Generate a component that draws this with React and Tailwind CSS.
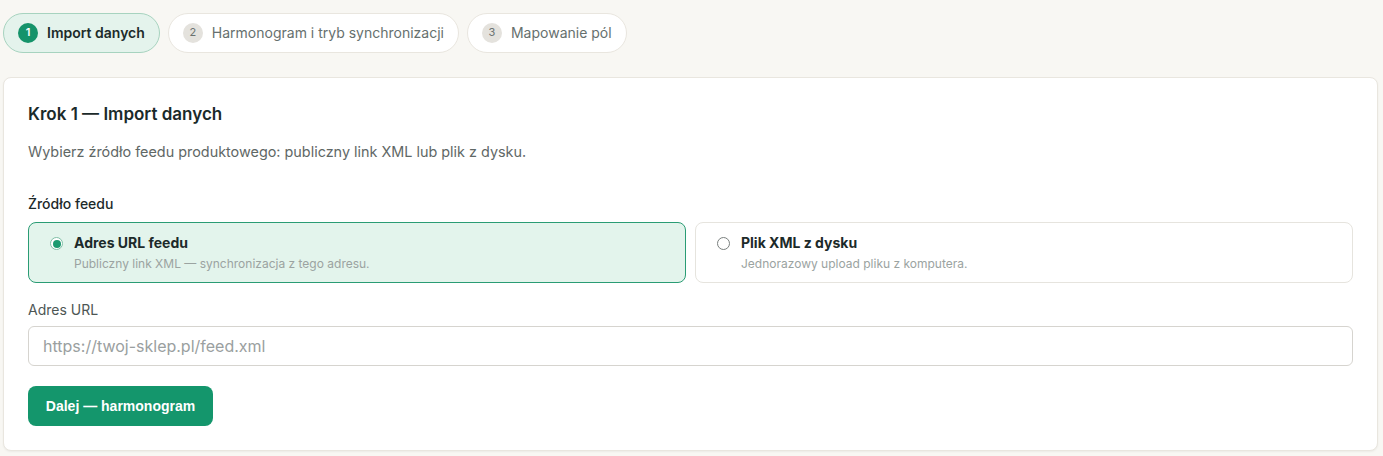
import { useState } from 'react'

const steps = [
  { n: 1, label: 'Import danych' },
  { n: 2, label: 'Harmonogram i tryb synchronizacji' },
  { n: 3, label: 'Mapowanie pól' },
]

function StepPill({ n, label, active }) {
  return (
    <div
      className={
        'h-10 flex items-center gap-[9px] pl-[14px] pr-[14px] rounded-full border text-sm ' +
        (active
          ? 'bg-[#e4f3ec] border-[#a7d3bf] text-[#1c2b2a] font-semibold'
          : 'bg-white border-[#e9e6df] text-[#66706e]')
      }
    >
      <span
        className={
          'w-5 h-5 rounded-full flex items-center justify-center text-[11px] ' +
          (active ? 'bg-[#15936a] text-white font-semibold' : 'bg-[#e4e2dd] text-[#6b7270] font-normal')
        }
      >
        {n}
      </span>
      {label}
    </div>
  )
}

function SourceOption({ checked, title, desc, onClick }) {
  return (
    <button
      type="button"
      onClick={onClick}
      className={
        'h-[61px] flex items-start gap-[11px] pl-[21px] pr-4 pt-[10px] rounded-lg border text-left ' +
        (checked ? 'bg-[#e3f4ec] border-[#2a9c74]' : 'bg-white border-[#e6e4de]')
      }
    >
      <span
        className={
          'mt-[4px] w-[13px] h-[13px] rounded-full border flex items-center justify-center shrink-0 ' +
          (checked ? 'border-[#7fbfa6] bg-white' : 'border-[#7a7f7e] bg-white')
        }
      >
        {checked && <span className="w-[8px] h-[8px] rounded-full bg-[#1a9a6f]" />}
      </span>
      <span className="flex flex-col">
        <span className="text-sm font-bold text-[#1c2a2a] leading-5">{title}</span>
        <span className="mt-[3px] text-xs text-[#9ba3a1] leading-4">{desc}</span>
      </span>
    </button>
  )
}

export default function App() {
  const [source, setSource] = useState('url')

  return (
    <div className="min-h-[456px] bg-[#f8f7f3] px-[3px] pt-[13px] pb-[5px] font-['Inter',sans-serif] text-[#1c2b2a]">
      <div className="flex gap-[8px]">
        {steps.map((s) => (
          <StepPill key={s.n} {...s} active={s.n === 1} />
        ))}
      </div>

      <div className="mt-6 mr-[2px] bg-white border border-[#e9e6df] rounded-lg shadow-[0_1px_2px_rgba(0,0,0,0.05)] px-6 pt-6 pb-6">
        <h2 className="text-[17px] leading-6 font-semibold text-[#1b2a2a]">Krok 1 — Import danych</h2>
        <p className="mt-[16px] text-[14.4px] leading-5 text-[#5f6866]">
          Wybierz źródło feedu produktowego: publiczny link XML lub plik z dysku.
        </p>

        <div className="mt-[32px] text-sm leading-5 font-medium text-[#1c2a2a]">Źródło feedu</div>
        <div className="mt-[8px] grid grid-cols-2 gap-[9px]">
          <SourceOption
            checked={source === 'url'}
            onClick={() => setSource('url')}
            title="Adres URL feedu"
            desc="Publiczny link XML — synchronizacja z tego adresu."
          />
          <SourceOption
            checked={source === 'file'}
            onClick={() => setSource('file')}
            title="Plik XML z dysku"
            desc="Jednorazowy upload pliku z komputera."
          />
        </div>

        <div className="mt-[17px] text-sm leading-5 text-[#4d5654]">Adres URL</div>
        <input
          type="text"
          placeholder="https://twoj-sklep.pl/feed.xml"
          className="mt-[6px] w-full h-10 px-[14px] rounded-md border border-[#d6d4cf] bg-white text-base placeholder:text-[#9aa0a0] outline-none"
        />

        <button
          type="button"
          className="mt-5 h-10 w-[185px] rounded-lg bg-[#14966c] text-white text-sm font-bold font-['Liberation_Sans',Arial,sans-serif]"
        >
          Dalej — harmonogram
        </button>
      </div>
    </div>
  )
}
